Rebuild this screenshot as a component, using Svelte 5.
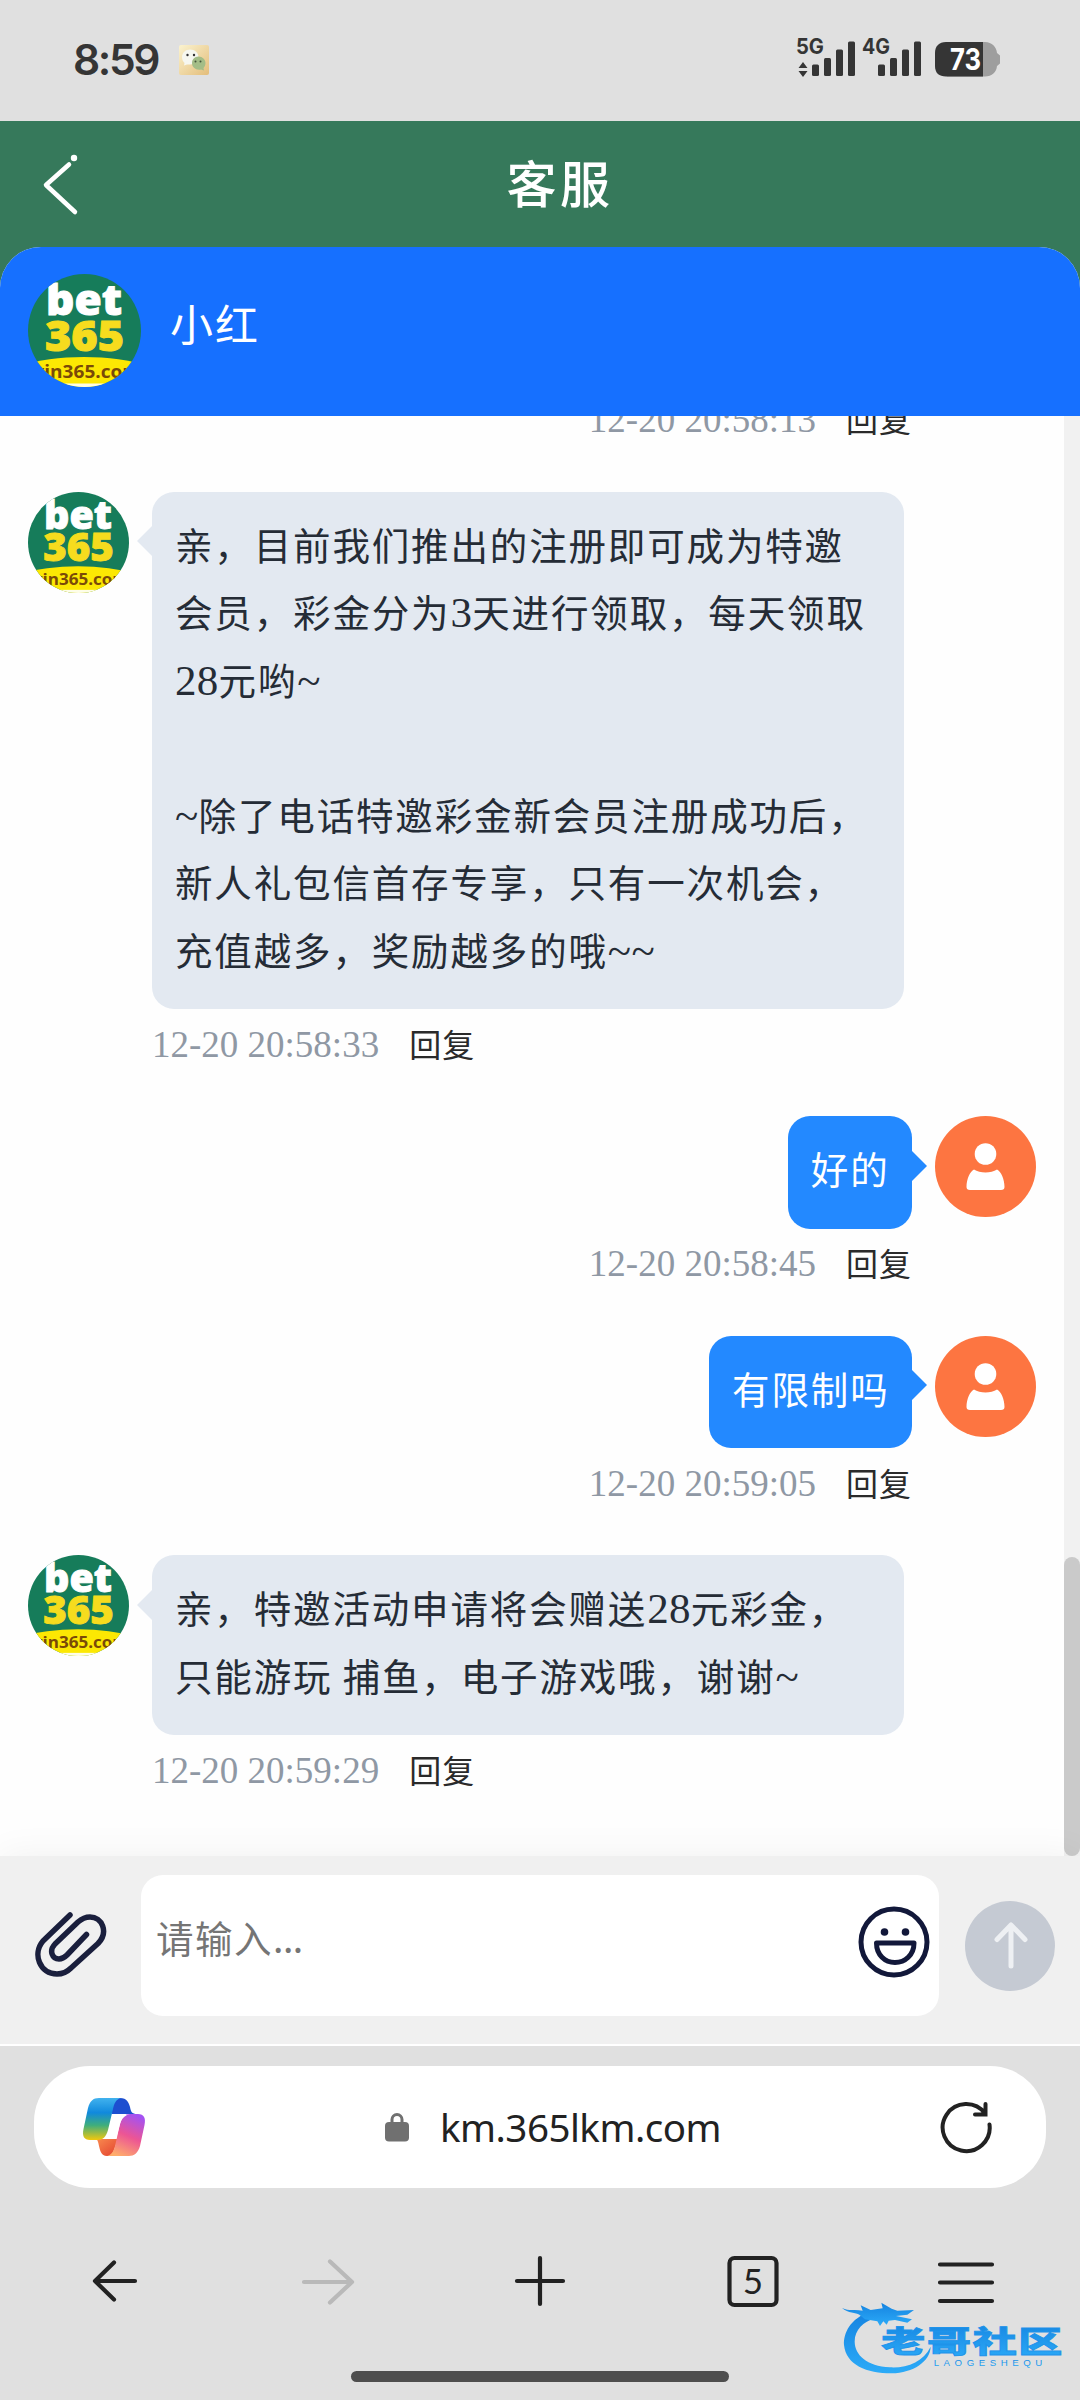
<script lang="ts">
  type Message = { from: 'agent' | 'user'; text: string; time: string };

  const title = '客服';
  const agentName = '小红';
  const url = 'km.365lkm.com';

  const messages: Message[] = [
    { from: 'user', text: '', time: '12-20 20:58:13' },
    {
      from: 'agent',
      text: '亲，目前我们推出的注册即可成为特邀\n会员，彩金分为3天进行领取，每天领取\n28元哟~\n\n~除了电话特邀彩金新会员注册成功后，\n新人礼包信首存专享，只有一次机会，\n充值越多，奖励越多的哦~~',
      time: '12-20 20:58:33'
    },
    { from: 'user', text: '好的', time: '12-20 20:58:45' },
    { from: 'user', text: '有限制吗', time: '12-20 20:59:05' },
    {
      from: 'agent',
      text: '亲，特邀活动申请将会赠送28元彩金，\n只能游玩 捕鱼，电子游戏哦，谢谢~',
      time: '12-20 20:59:29'
    }
  ];

  // digits and tildes are set in the serif face, one size up
  const split = (text: string) => text.split(/([0-9~]+)/).filter(Boolean);
  const isLatin = (part: string) => /^[0-9~]/.test(part);
</script>

{#snippet agentAvatar()}
  <svg class="avatar-img" viewBox="0 0 113 113">
    <rect width="113" height="113" fill="#167c5a" />
    <text x="18" y="41" textLength="76" lengthAdjust="spacingAndGlyphs" class="logo-text" font-size="43" fill="#fff" stroke="#fff">bet</text>
    <text x="17" y="77" textLength="79" lengthAdjust="spacingAndGlyphs" class="logo-text" font-size="43" fill="#f6dc1e" stroke="#f6dc1e">365</text>
    <ellipse cx="56" cy="112" rx="90" ry="29" fill="#fce803" />
    <text x="0" y="103.500" textLength="113" lengthAdjust="spacingAndGlyphs" class="logo-small" font-size="18" fill="#7a4a08">win365.com</text>
    <rect y="109.5" width="113" height="4" fill="#fdfde8" />
  </svg>
{/snippet}

{#snippet userAvatar()}
  <svg class="avatar-img" viewBox="0 0 101 101">
    <rect width="101" height="101" fill="#fd7541" />
    <circle cx="50.500" cy="38" r="10.800" fill="#fff" />
    <path d="M39 53.500C45 57.500 56 57.500 62 53.500C66 55.500 69.500 63 69.500 71Q69.500 74 66 74H35Q31.500 74 31.500 71C31.500 63 35 55.500 39 53.500Z" fill="#fff" />
  </svg>
{/snippet}

{#snippet signal(label: string, arrows: boolean)}
  <svg class="signal" width="60" height="40" viewBox="0 0 60 40">
    <text x="0" y="16.500" textLength="28" lengthAdjust="spacingAndGlyphs" class="net" font-size="21.500">{label}</text>
    {#if arrows}
      <path d="M7 25l4.500 6h-9zM7 40l4.500-6h-9z" />
    {/if}
    <rect x="16" y="27.500" width="7" height="11.500" rx="1.500" />
    <rect x="28" y="21" width="7" height="18" rx="1.500" />
    <rect x="40" y="12.500" width="7" height="26.500" rx="1.500" />
    <rect x="52" y="4.500" width="7" height="34.500" rx="1.500" />
  </svg>
{/snippet}

<div class="screen">
  <div class="status-bar">
    <div class="status-left">
      <span class="clock">8:59</span>
      <svg class="wechat" width="32" height="32" viewBox="0 0 32 32">
        <defs>
          <linearGradient id="gold" x1="0" y1="0" x2="1" y2="1">
            <stop offset="0" stop-color="#fbf3cf" />
            <stop offset="1" stop-color="#e3bd7a" />
          </linearGradient>
        </defs>
        <rect x="1" y="1" width="30" height="30" rx="2" fill="url(#gold)" />
        <path d="M12 5.500c5 0 8.500 3.500 8.500 7.500s-3.500 7.500-8.500 7.500l-3 0-3 1 .5-2.500C5 17.500 4 15.500 4 13c0-4 3.500-7.500 8-7.500z" fill="#f6f7f0" />
        <path d="M20.500 12.500c4 0 7 3 7 6.500 0 2-1 4-2 5l.5 2.500-3-1c-5 1-9-2-9-6.500 0-3.500 2.500-6.500 6.500-6.500z" fill="#a3bd87" />
        <circle cx="9.500" cy="11" r="1.200" fill="#333" />
        <circle cx="16" cy="11" r="1.200" fill="#333" />
        <circle cx="17.500" cy="17.500" r="1" fill="#43543a" />
        <circle cx="22.500" cy="17.500" r="1" fill="#43543a" />
      </svg>
    </div>
    <div class="status-right">
      {@render signal('5G', true)}
      {@render signal('4G', false)}
      <svg class="battery" width="66" height="35" viewBox="0 0 66 35">
        <path d="M12 0H50C57 0 61.500 5 62 11L65 13.500V21.500L62 24C61.500 30 57 34.500 50 34.500H12Z" fill="#9e9e9e" />
        <path d="M48 0H11C4 0 0 4 0 11V24C0 31 4 34.500 11 34.500H48Z" fill="#353535" />
        <text x="15" y="28" textLength="31" lengthAdjust="spacingAndGlyphs" class="net" font-size="30" fill="#fff">73</text>
      </svg>
    </div>
  </div>

  <header class="page-header">
    <svg class="back" width="40" height="64" viewBox="0 0 40 64">
      <path d="M28 12.500L5 33L34 60" fill="none" stroke="#fff" stroke-width="4.500" stroke-linecap="round" stroke-linejoin="round" />
      <circle cx="33" cy="6" r="3.200" fill="#fff" />
    </svg>
    <h1>{title}</h1>
  </header>

  <section class="chat">
    <div class="agent-bar">
      <div class="avatar large">{@render agentAvatar()}</div>
      <span class="agent-name">{agentName}</span>
    </div>

    <div class="chat-body">
      <div class="messages">
        {#each messages as message}
          <div class="message {message.from}">
            {#if message.text}
              <div class="avatar">
                {#if message.from === 'agent'}
                  {@render agentAvatar()}
                {:else}
                  {@render userAvatar()}
                {/if}
              </div>
            {:else}
              <div class="avatar-gap"></div>
            {/if}
            <div class="content">
              {#if message.text}
                <div class="bubble">{#each split(message.text) as part}{#if isLatin(part)}<span class="latin">{part}</span>{:else}{part}{/if}{/each}</div>
              {/if}
              <div class="meta">
                <span class="time">{message.time}</span>
                <span class="reply">回复</span>
              </div>
            </div>
          </div>
        {/each}
      </div>
      <div class="scrollbar"><div class="thumb"></div></div>
    </div>

    <div class="composer">
      <svg class="clip" width="74" height="68" viewBox="34 12 74 68">
        <path d="M70 16L43 42C32 55 40 75 57 75C63 75 67 73 71 69L98 44.500C109 33 102 18 90 18C85 18 82 19.500 78 23L55 45C48.500 52 52.500 60 59 60C62 60 64 59 67 56L86.500 35.500" fill="none" stroke="#1a1f3d" stroke-width="5.500" stroke-linecap="round" stroke-linejoin="round" />
      </svg>
      <div class="input">
        <span class="placeholder">请输入<span class="dots">...</span></span>
        <svg class="smile" width="72" height="72" viewBox="0 0 72 72">
          <g fill="none" stroke="#12183a" stroke-width="5">
            <circle cx="36" cy="36" r="33" />
            <path d="M18.500 37H56C56 49 47 56.500 37 56.500S18.500 49 18.500 37Z" stroke-linejoin="round" />
          </g>
          <circle cx="26.500" cy="26" r="3.800" fill="#12183a" />
          <circle cx="47.500" cy="26" r="3.800" fill="#12183a" />
        </svg>
      </div>
      <svg class="send" width="90" height="90" viewBox="0 0 90 90">
        <circle cx="45" cy="45" r="45" fill="#c5cad3" />
        <path d="M46 65V25M32 38.500L46 24L60 38.500" fill="none" stroke="#eef0f3" stroke-width="5" stroke-linecap="round" stroke-linejoin="round" />
      </svg>
    </div>
  </section>

  <footer class="browser">
    <div class="address-bar">
      <svg class="copilot" width="64" height="60" viewBox="82 97 64 60">
        <defs>
          <linearGradient id="sky" x1="0" y1="0" x2="0" y2="1">
            <stop offset="0" stop-color="#41b2ee" />
            <stop offset="0.350" stop-color="#1089dd" />
            <stop offset="0.650" stop-color="#3fae7c" />
            <stop offset="1" stop-color="#f2c80c" />
          </linearGradient>
          <linearGradient id="rose" x1="0.700" y1="0" x2="0.300" y2="1">
            <stop offset="0" stop-color="#a452f2" />
            <stop offset="0.500" stop-color="#ec5594" />
            <stop offset="1" stop-color="#ffad6b" />
          </linearGradient>
          <linearGradient id="flame" x1="0" y1="0" x2="1" y2="1">
            <stop offset="0" stop-color="#f98b4f" />
            <stop offset="1" stop-color="#e3402f" />
          </linearGradient>
        </defs>
        <path d="M112 98H120C127 98 129 103 130 107C131 112 132 114 137 114H112Z" fill="#1d4fd0" />
        <path d="M96 139H118L114 150C112 155 110 156 107 156C101 156 100 150 99 146C98 142 98 140 96 139Z" fill="url(#flame)" />
        <path d="M99 98H121C116 99 114 104 113 109L108 130C106 137 103 140 97 140H90C84 140 82 136 83.500 129L88 108C90 101 93 98 99 98Z" fill="url(#sky)" />
        <path d="M130 114H138C144 114 146 118 144.500 125L140 146C138 153 134 156 129 156H107C112 155 114 150 115 146L120 124C122 117 125 114 130 114Z" fill="url(#rose)" />
        <path d="M117 115H127C123 117 121 120 120 124L116 139H105C107 137 108 134 109 130L112 119C113 116 115 115 117 115Z" fill="#fff" />
      </svg>
      <div class="address">
        <svg width="24" height="30" viewBox="0 0 24 30">
          <path d="M7 12V7.500A4.800 4.800 0 0 1 17 7.500V12" fill="none" stroke="#707070" stroke-width="3" />
          <rect y="10" width="24" height="19.500" rx="4" fill="#707070" />
        </svg>
        <span class="url">{url}</span>
      </div>
      <svg class="refresh" width="54" height="54" viewBox="0 0 54 54">
        <path d="M50.500 24.500A23.500 23.500 0 1 1 46 13.500M46.500 4V14.500H36" fill="none" stroke="#222" stroke-width="4" stroke-linecap="round" />
      </svg>
    </div>

    <nav class="toolbar">
      <svg width="60" height="60" viewBox="0 0 60 60">
        <path d="M50 30H10M29 11.500L10 30L29 48.500" class="line" />
      </svg>
      <svg width="60" height="60" viewBox="0 0 60 60">
        <path d="M6 31H54M32 10.500L54 31L32 51.500" class="line faded" />
      </svg>
      <svg width="60" height="60" viewBox="0 0 60 60">
        <path d="M7 30H53M30 7V53" class="line" />
      </svg>
      <svg width="60" height="60" viewBox="0 0 60 60">
        <rect x="6.500" y="7" width="47" height="47" rx="5" class="line" />
        <text x="30" y="42.500" text-anchor="middle" class="tab-count">5</text>
      </svg>
      <svg width="60" height="60" viewBox="0 0 60 60">
        <path d="M5 13.500H57M5 31.500H57M5 50H57" class="line" />
      </svg>
    </nav>
    <div class="home-bar"></div>

    <svg class="watermark" width="260" height="100" viewBox="0 0 780 300">
      <defs>
        <linearGradient id="water" x1="0" y1="0" x2="0" y2="1">
          <stop offset="0" stop-color="#1583e0" />
          <stop offset="1" stop-color="#2cabf8" />
        </linearGradient>
      </defs>
      <g fill="url(#water)">
        <path d="M150 65C90 85 70 130 72 165C78 225 140 250 215 250C280 248 330 215 332 170C310 215 260 235 210 232C140 228 105 195 104 155C104 120 130 95 165 85Z" />
        <path d="M66 54C80 60 92 61 104 60C112 60 120 62 128 62L122 46L152 60L188 55L184 38L215 56L232 62L282 60L262 74L228 78L276 88L262 98L225 90L206 92L200 104L190 94L180 108L172 94L135 88L118 74C108 68 84 70 66 54Z" />
        <text transform="translate(184 186) scale(1.5 1)" class="mark" font-size="88" textLength="362" lengthAdjust="spacing">老哥社区</text>
        <text x="341" y="229" class="mark-sub" font-size="29" textLength="326">LAOGESHEQU</text>
      </g>
    </svg>
  </footer>
</div>

<style>
  :global(body) {
    margin: 0;
  }

  .screen {
    display: flex;
    flex-direction: column;
    width: 1080px;
    height: 2400px;
    overflow: hidden;
    background: #36795b;
    font-family: 'Noto Sans CJK SC', sans-serif;
  }

  svg {
    display: block;
    flex: none;
  }

  .status-bar {
    display: flex;
    justify-content: space-between;
    height: 121px;
    box-sizing: border-box;
    padding: 37px 79px 0 73px;
    background: #e0e0e0;
    color: #353535;
  }

  .status-left,
  .status-right {
    display: flex;
    align-items: flex-start;
  }

  .clock {
    width: 105px;
    font: 600 42.5px/46px Inter, sans-serif;
    letter-spacing: -2.4px;
  }

  .wechat {
    margin-top: 7px;
  }

  .signal {
    margin-right: 6px;
    overflow: visible;
    fill: #353535;
  }

  .battery {
    margin: 5px 0 0 7px;
  }

  .net {
    font-family: Inter, sans-serif;
    font-weight: 700;
  }

  .page-header {
    display: flex;
    align-items: center;
    height: 126px;
  }

  .back {
    margin-left: 41px;
  }

  h1 {
    flex: 1;
    height: 126px;
    margin: 0;
    padding-right: 41px;
    color: #fff;
    font-size: 50px;
    font-weight: 500;
    line-height: 120px;
    letter-spacing: 3.5px;
    text-align: center;
  }

  .chat {
    display: flex;
    flex-direction: column;
    height: 1799px;
    border-radius: 41px 41px 0 0;
    overflow: hidden;
    background: #fefefe;
  }

  .agent-bar {
    display: flex;
    gap: 29px;
    height: 169px;
    box-sizing: border-box;
    padding: 27px 28px 0;
    background: #1670ff;
  }

  .agent-name {
    color: #fff;
    font-size: 43px;
    line-height: 97px;
    letter-spacing: 2px;
  }

  .avatar {
    flex: none;
    width: 101px;
    height: 101px;
    border-radius: 50%;
    overflow: hidden;
  }

  .avatar.large {
    width: 113px;
    height: 113px;
  }

  .avatar-img {
    width: 100%;
    height: 100%;
  }

  .avatar-gap {
    flex: none;
    width: 101px;
  }

  .logo-text {
    font-family: 'Open Sans', sans-serif;
    font-weight: 800;
    stroke-width: 1;
  }

  .logo-small {
    font-family: 'Open Sans', sans-serif;
    font-weight: 700;
  }

  .chat-body {
    display: flex;
    height: 1440px;
    overflow: hidden;
  }

  .messages {
    display: flex;
    flex: 1;
    flex-direction: column;
    justify-content: flex-end;
    padding: 0 28px 14px;
  }

  .message {
    display: flex;
    gap: 23px;
  }

  .message.user {
    flex-direction: row-reverse;
  }

  .content {
    display: flex;
    flex-direction: column;
    align-items: flex-start;
  }

  .user .content {
    align-items: flex-end;
  }

  .bubble {
    position: relative;
    box-sizing: border-box;
    padding: 18px 22.5px 27.3px 23px;
    border-radius: 22px;
    font-size: 37.5px;
    line-height: 67.5px;
    letter-spacing: 1.85px;
    white-space: pre;
  }

  .agent .bubble {
    width: 752px;
    background: #e3e9f1;
    color: #252c36;
  }

  .user .bubble {
    background: #2389ff;
    color: #fff;
  }

  .bubble::before {
    content: '';
    position: absolute;
    top: 34.5px;
    border: 15px solid transparent;
  }

  .agent .bubble::before {
    right: 100%;
    border-left: 0;
    border-right-color: #e3e9f1;
  }

  .user .bubble::before {
    left: 100%;
    border-right: 0;
    border-left-color: #2389ff;
  }

  .latin {
    font-family: 'Liberation Serif', serif;
    font-size: 43px;
    line-height: 1;
    letter-spacing: 0.3px;
  }

  .meta {
    display: flex;
    align-items: baseline;
    gap: 30px;
    height: 106.7px;
    box-sizing: border-box;
    padding-top: 10.5px;
  }

  .time {
    color: #8f98a4;
    font: 37px/46px 'Liberation Serif', serif;
  }

  .reply {
    color: #2a2a2a;
    font-size: 32px;
    line-height: 46px;
    letter-spacing: 1px;
  }

  .scrollbar {
    display: flex;
    flex-direction: column;
    justify-content: flex-end;
    width: 16px;
    background: #f1f1f1;
  }

  .thumb {
    height: 299px;
    border-radius: 8px;
    background: #cacaca;
  }

  .composer {
    position: relative;
    display: flex;
    align-items: flex-start;
    height: 188px;
    background: #f0f0f0;
    box-shadow: 0 0 36px rgba(0, 0, 0, 0.06);
    border-bottom: 2px solid #fff;
  }

  .clip {
    margin: 55px 33px 0 34px;
  }

  .input {
    display: flex;
    justify-content: space-between;
    width: 798px;
    height: 141px;
    box-sizing: border-box;
    margin-top: 19px;
    padding: 31px 9px 0 15px;
    border-radius: 22px;
    background: #fff;
  }

  .placeholder {
    color: #757575;
    font-size: 37.5px;
    line-height: 62px;
    letter-spacing: 1.5px;
  }

  .dots {
    letter-spacing: -0.5px;
  }

  .send {
    margin: 45px 0 0 26px;
  }

  .browser {
    position: relative;
    display: flex;
    flex: 1;
    flex-direction: column;
    align-items: center;
    padding-top: 20px;
    background: #e0e0e0;
  }

  .address-bar {
    display: flex;
    align-items: center;
    justify-content: space-between;
    width: 1012px;
    height: 122px;
    box-sizing: border-box;
    padding: 0 53px 0 48px;
    border-radius: 56px;
    background: #fff;
  }

  .address {
    display: flex;
    align-items: center;
    gap: 31px;
    margin-left: 21px;
  }

  .url {
    color: #222;
    font: 38.5px/50px 'Noto Sans', sans-serif;
    letter-spacing: -0.5px;
  }

  .toolbar {
    display: flex;
    justify-content: space-between;
    width: 910px;
    margin-top: 63px;
  }

  .line {
    fill: none;
    stroke: #222;
    stroke-width: 4.2;
    stroke-linecap: round;
    stroke-linejoin: round;
  }

  .line.faded {
    stroke: #b9b9b9;
  }

  .tab-count {
    fill: #222;
    font: 35px Lato, sans-serif;
  }

  .home-bar {
    width: 378px;
    height: 11px;
    margin-top: 60px;
    border-radius: 6px;
    background: #4e4e4e;
  }

  .watermark {
    position: absolute;
    right: 0;
    bottom: 10px;
  }

  .mark {
    font-family: 'Noto Sans CJK SC', sans-serif;
    font-weight: 900;
    stroke: #1f93ea;
    stroke-width: 2.5;
  }

  .mark-sub {
    font-family: 'Liberation Sans', sans-serif;
  }
</style>
